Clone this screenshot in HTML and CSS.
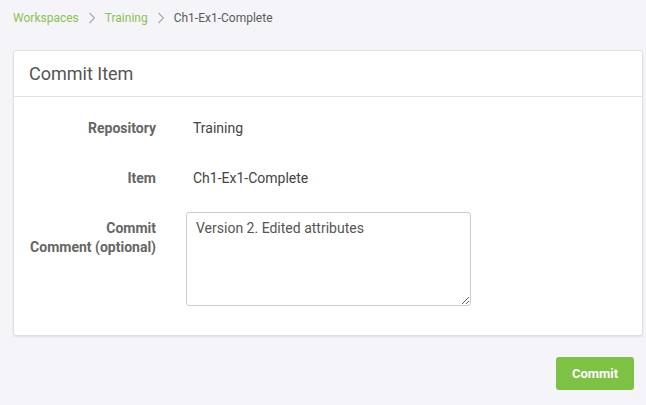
FILE: index.html
```html
<!DOCTYPE html>
<html>
<head>
<meta charset="utf-8">
<link rel="stylesheet" href="styles.css">
</head>
<body>
<nav class="crumbs">
  <a class="crumb-link">Workspaces</a>
  <svg class="chev" viewBox="0 0 6 12" width="6" height="12"><path d="M0.5 1 L5.5 6 L0.5 11" fill="none" stroke="#a7a9ad" stroke-width="1.2"/></svg>
  <a class="crumb-link">Training</a>
  <svg class="chev" viewBox="0 0 6 12" width="6" height="12"><path d="M0.5 1 L5.5 6 L0.5 11" fill="none" stroke="#a7a9ad" stroke-width="1.2"/></svg>
  <span class="crumb-current">Ch1-Ex1-Complete</span>
</nav>
<section class="card">
  <header class="card-head">Commit Item</header>
  <div class="card-body">
    <div class="row">
      <div class="label">Repository</div>
      <div class="value">Training</div>
    </div>
    <div class="row">
      <div class="label">Item</div>
      <div class="value">Ch1-Ex1-Complete</div>
    </div>
    <div class="row">
      <div class="label">Commit<br>Comment (optional)</div>
      <div class="field"><textarea class="comment">Version 2. Edited attributes</textarea></div>
    </div>
  </div>
</section>
<div class="actions">
  <button class="btn">Commit</button>
</div>
</body>
</html>
```

FILE: styles.css
```css
html, body {
  margin: 0;
  padding: 0;
}
body {
  background: #f5f5f9;
  font-family: Roboto, "Liberation Sans", sans-serif;
  color: #555;
  width: 646px;
  height: 405px;
  overflow: hidden;
}
.crumbs {
  display: flex;
  align-items: center;
  gap: 10px;
  height: 36px;
  padding: 0 13px;
  font-size: 12px;
}
.crumb-link {
  color: #8cc152;
}
.chev {
  display: block;
}
.crumb-current {
  color: #5a5a5a;
}
.card {
  margin: 14px 3px 0 13px;
  background: #fff;
  border: 1px solid #dfe0e4;
  border-radius: 3px;
  box-shadow: 0 1px 2px rgba(0,0,0,0.08);
}
.card-head {
  height: 45px;
  line-height: 45px;
  padding-left: 15px;
  font-size: 18px;
  color: #555;
  border-bottom: 1px solid #e2e3e6;
}
.card-body {
  display: flex;
  flex-direction: column;
  gap: 16px;
  padding: 15px 0 29px;
}
.row {
  display: grid;
  grid-template-columns: 142px 1fr;
  column-gap: 30px;
  min-height: 34px;
}
.label {
  text-align: right;
  font-weight: 700;
  font-size: 14px;
  line-height: 19px;
  padding-top: 7px;
  color: #666;
}
.value {
  padding: 7px 0 0 7px;
  font-size: 14px;
  line-height: 19px;
  color: #444;
}
.field {
  display: flex;
}
.comment {
  box-sizing: border-box;
  width: 285px;
  height: 94px;
  margin: 0;
  padding: 6px 9px;
  border: 1px solid #ccc;
  border-radius: 3px;
  font-family: Roboto, "Liberation Sans", sans-serif;
  font-size: 14px;
  line-height: 19px;
  color: #555;
  background: #fff;
}
.actions {
  display: flex;
  justify-content: flex-end;
  padding: 21px 12px 0 0;
}
.btn {
  width: 78px;
  height: 33px;
  border: none;
  border-radius: 3px;
  background: #7dc244;
  color: #fff;
  font-family: Roboto, "Liberation Sans", sans-serif;
  font-weight: 700;
  font-size: 13px;
}
```
